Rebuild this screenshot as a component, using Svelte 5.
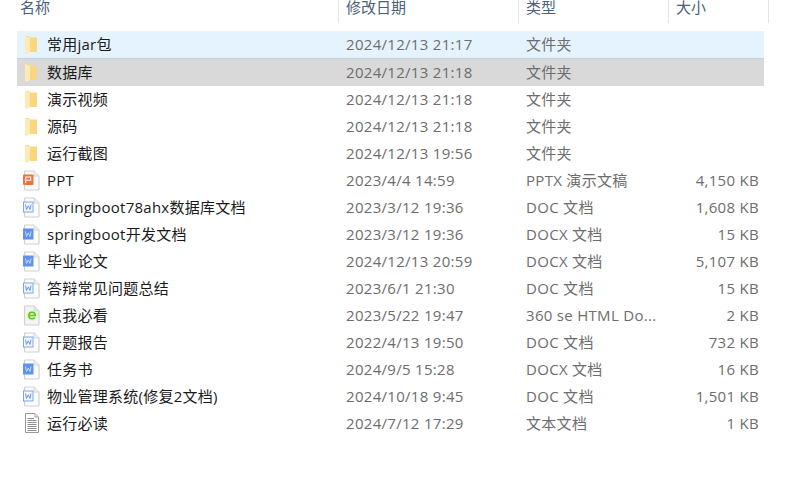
<script>
	const columns = [
		{ label: '名称', cls: 'name' },
		{ label: '修改日期', cls: 'date' },
		{ label: '类型', cls: 'kind' },
		{ label: '大小', cls: 'size' }
	];

	const files = [
		{ name: '常用jar包', date: '2024/12/13 21:17', kind: '文件夹', size: '', icon: 'folder', state: 'hover' },
		{ name: '数据库', date: '2024/12/13 21:18', kind: '文件夹', size: '', icon: 'folder', state: 'selected' },
		{ name: '演示视频', date: '2024/12/13 21:18', kind: '文件夹', size: '', icon: 'folder' },
		{ name: '源码', date: '2024/12/13 21:18', kind: '文件夹', size: '', icon: 'folder' },
		{ name: '运行截图', date: '2024/12/13 19:56', kind: '文件夹', size: '', icon: 'folder' },
		{ name: 'PPT', date: '2023/4/4 14:59', kind: 'PPTX 演示文稿', size: '4,150 KB', icon: 'ppt' },
		{ name: 'springboot78ahx数据库文档', date: '2023/3/12 19:36', kind: 'DOC 文档', size: '1,608 KB', icon: 'doc' },
		{ name: 'springboot开发文档', date: '2023/3/12 19:36', kind: 'DOCX 文档', size: '15 KB', icon: 'docx' },
		{ name: '毕业论文', date: '2024/12/13 20:59', kind: 'DOCX 文档', size: '5,107 KB', icon: 'docx' },
		{ name: '答辩常见问题总结', date: '2023/6/1 21:30', kind: 'DOC 文档', size: '15 KB', icon: 'doc' },
		{ name: '点我必看', date: '2023/5/22 19:47', kind: '360 se HTML Do...', size: '2 KB', icon: 'html' },
		{ name: '开题报告', date: '2022/4/13 19:50', kind: 'DOC 文档', size: '732 KB', icon: 'doc' },
		{ name: '任务书', date: '2024/9/5 15:28', kind: 'DOCX 文档', size: '16 KB', icon: 'docx' },
		{ name: '物业管理系统(修复2文档)', date: '2024/10/18 9:45', kind: 'DOC 文档', size: '1,501 KB', icon: 'doc' },
		{ name: '运行必读', date: '2024/7/12 17:29', kind: '文本文档', size: '1 KB', icon: 'txt' }
	];
</script>

{#snippet page()}
	<path d="M8.500 2h8.500l5 5v13a1 1 0 0 1-1 1H8.500a1 1 0 0 1-1-1V3a1 1 0 0 1 1-1z" fill="#fcfcfc" stroke="#d0d0d0" stroke-width="1.200" />
	<path d="M17 2v5h5" fill="#eeeeee" stroke="#d8d8d8" />
{/snippet}

{#snippet fileIcon(icon)}
	<svg class="icon" width="24" height="24" viewBox="0 0 24 24">
		{#if icon === 'folder'}
			<path d="M8 3h3.500l1.500 1.500h7V19h-7z" fill="#f9d77e" />
			<path d="M8 3l5 2v14l-3.500 2L8 19.500z" fill="#fdeab6" />
		{:else if icon === 'ppt'}
			{@render page()}
			<rect x="6" y="5.500" width="10.500" height="10.500" rx="1" fill="#f2703c" />
			<path d="M8.700 14V8h5v3.200h-5" fill="none" stroke="#fff" stroke-width="1.100" />
		{:else if icon === 'doc'}
			{@render page()}
			<rect x="6.500" y="6" width="9.500" height="10" fill="#f2f6fe" stroke="#7aa5ef" />
			<path d="M8.500 8.500l1 5 1.800-3.600 1.700 3.600 1-5" fill="none" stroke="#5a8dea" stroke-width="0.900" />
		{:else if icon === 'docx'}
			{@render page()}
			<rect x="6" y="5.500" width="10.500" height="11" fill="#5f91ef" />
			<path d="M8.500 8.500l1 5 1.800-3.600 1.700 3.600 1-5" fill="none" stroke="#cfe0fb" stroke-width="0.900" />
		{:else if icon === 'html'}
			<path d="M8.500 2h8.500l5 5v13a1 1 0 0 1-1 1H8.500a1 1 0 0 1-1-1V3a1 1 0 0 1 1-1z" fill="#f4f4f4" stroke="#d0d0d0" stroke-width="1.200" />
			<path d="M17 2v5h5" fill="#e4e4e4" stroke="#d8d8d8" />
			<circle cx="15" cy="11.500" r="5.500" fill="#e2f5c9" />
			<path d="M11.800 11.500h6.400c0-2-1.300-3.300-3.200-3.300s-3.200 1.400-3.200 3.300 1.300 3.300 3.200 3.300c1.300 0 2.300-.6 2.800-1.500" fill="none" stroke="#62c522" stroke-width="1.600" />
		{:else}
			<path d="M8.500 1.500h9.500l3.500 3.500v15.500h-13z" fill="#fdfdfd" stroke="#9a9a9a" />
			<path d="M18 1.500V5h3.500" fill="#e6e6e6" stroke="#a8a8a8" />
			<path d="M10.500 6.500h6.500M10.500 8.500h9M10.500 10.500h9M10.500 12.500h9M10.500 14.500h9M10.500 16.500h9M10.500 18.500h9" stroke="#8e8e8e" />
		{/if}
	</svg>
{/snippet}

<main class="explorer">
	<header class="columns">
		{#each columns as col}
			<div class="col {col.cls}">{col.label}</div>
		{/each}
	</header>

	<ul class="rows">
		{#each files as file}
			<li class="row {file.state ?? ''}">
				<div class="cell name">
					{@render fileIcon(file.icon)}
					<span>{file.name}</span>
				</div>
				<div class="cell date">{file.date}</div>
				<div class="cell kind">{file.kind}</div>
				<div class="cell size">{file.size}</div>
			</li>
		{/each}
	</ul>
</main>

<style>
	:global(body) {
		background: #fff;
	}

	.explorer {
		height: 478px;
		overflow: hidden;
		font-family: "Open Sans", "Noto Sans CJK SC", sans-serif;
		font-size: 15px;
	}

	.columns {
		display: flex;
		height: 23px;
		margin-bottom: 8px;
		color: #4c607a;
	}

	.col {
		box-sizing: border-box;
		line-height: 15px;
		padding-left: 7px;
		border-right: 1px solid #e5e5e5;
	}

	.col.name {
		width: 339px;
		padding-left: 20px;
	}

	.col.date {
		width: 180px;
	}

	.col.kind {
		width: 150px;
	}

	.col.size {
		width: 100px;
	}

	.rows {
		list-style: none;
		margin: 0 36px 0 17px;
		padding: 0;
	}

	.row {
		display: grid;
		grid-template-columns: 329px 180px 150px 83px;
		box-sizing: border-box;
		height: 27px;
		line-height: 27px;
		color: #6d6d6d;
	}

	.row.hover {
		height: 28px;
		background: #e5f3ff;
		border-bottom: 1px solid #c3d3e2;
	}

	.row.selected {
		background: #d9d9d9;
	}

	.cell {
		letter-spacing: 0.3px;
	}

	.cell.name {
		display: flex;
		align-items: center;
		height: 27px;
		color: #1a1a1a;
		letter-spacing: 0.25px;
	}

	.icon {
		margin-right: 6px;
		flex: none;
	}

	.cell.size {
		text-align: right;
	}
</style>
